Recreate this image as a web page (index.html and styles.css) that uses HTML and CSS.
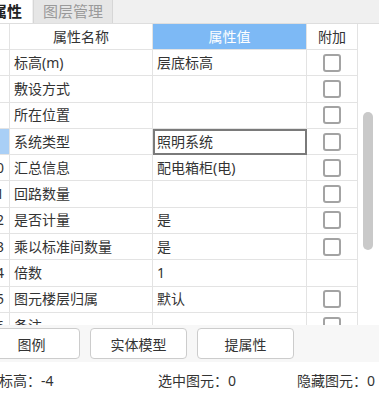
FILE: index.html
```html
<!DOCTYPE html>
<html lang="zh-CN">
<head>
    <meta charset="UTF-8">
    <meta name="viewport" content="width=device-width, initial-scale=1.0">
    <title>属性</title>
    <link rel="stylesheet" href="styles.css">
</head>
<body>
    <div class="panel">
        <!-- Tabs -->
        <div class="tabs">
            <div class="tab active">属性</div>
            <div class="tab">图层管理</div>
        </div>

        <!-- Property grid -->
        <div class="grid-wrap">
            <div class="grid">
                <div class="row head">
                    <div class="cell num"></div>
                    <div class="cell name center">属性名称</div>
                    <div class="cell value center blue">属性值</div>
                    <div class="cell add center">附加</div>
                </div>
                <div class="row">
                    <div class="cell num"></div>
                    <div class="cell name">标高(m)</div>
                    <div class="cell value">层底标高</div>
                    <div class="cell add"><span class="check"></span></div>
                </div>
                <div class="row">
                    <div class="cell num"></div>
                    <div class="cell name">敷设方式</div>
                    <div class="cell value"></div>
                    <div class="cell add"><span class="check"></span></div>
                </div>
                <div class="row">
                    <div class="cell num"></div>
                    <div class="cell name">所在位置</div>
                    <div class="cell value"></div>
                    <div class="cell add"><span class="check"></span></div>
                </div>
                <div class="row">
                    <div class="cell num selected"></div>
                    <div class="cell name">系统类型</div>
                    <div class="cell value editing">照明系统</div>
                    <div class="cell add"><span class="check"></span></div>
                </div>
                <div class="row">
                    <div class="cell num">10</div>
                    <div class="cell name">汇总信息</div>
                    <div class="cell value">配电箱柜(电)</div>
                    <div class="cell add"><span class="check"></span></div>
                </div>
                <div class="row">
                    <div class="cell num">11</div>
                    <div class="cell name">回路数量</div>
                    <div class="cell value"></div>
                    <div class="cell add"><span class="check"></span></div>
                </div>
                <div class="row">
                    <div class="cell num">12</div>
                    <div class="cell name">是否计量</div>
                    <div class="cell value">是</div>
                    <div class="cell add"><span class="check"></span></div>
                </div>
                <div class="row">
                    <div class="cell num">13</div>
                    <div class="cell name">乘以标准间数量</div>
                    <div class="cell value">是</div>
                    <div class="cell add"><span class="check"></span></div>
                </div>
                <div class="row">
                    <div class="cell num">14</div>
                    <div class="cell name">倍数</div>
                    <div class="cell value">1</div>
                    <div class="cell add"></div>
                </div>
                <div class="row">
                    <div class="cell num">15</div>
                    <div class="cell name">图元楼层归属</div>
                    <div class="cell value">默认</div>
                    <div class="cell add"><span class="check"></span></div>
                </div>
                <div class="row">
                    <div class="cell num">16</div>
                    <div class="cell name">备注</div>
                    <div class="cell value"></div>
                    <div class="cell add"><span class="check"></span></div>
                </div>
            </div>

            <!-- Scrollbar -->
            <div class="scroll">
                <div class="thumb"></div>
            </div>
        </div>

        <!-- Buttons -->
        <div class="actions">
            <button type="button">图例</button>
            <button type="button">实体模型</button>
            <button type="button">提属性</button>
        </div>

        <!-- Status bar -->
        <div class="status">
            <span class="stat first">标高：-4</span>
            <span class="stat second">选中图元：0</span>
            <span class="stat">隐藏图元：0</span>
        </div>
    </div>
</body>
</html>
```

FILE: styles.css
```css
/* General Styles */
body {
    margin: 0;
    padding: 0;
    overflow: hidden;
    background-color: #ffffff;
    color: #333333;
    font-family: "Noto Sans", "Noto Sans CJK SC", sans-serif;
    font-size: 14px;
}

.panel {
    width: 397px;
    margin-left: -18px;
}

/* Tabs */
.tabs {
    display: flex;
    height: 23px;
    background-color: #f0f0f0;
    border-bottom: 1px solid #dedede;
}

.tab {
    width: 80px;
    margin-left: 1px;
    background-color: #e6e6e6;
    border-left: 1px solid #d6d6d6;
    border-right: 1px solid #d6d6d6;
    box-sizing: border-box;
    color: #9a9a9a;
    font-size: 15px;
    line-height: 23px;
    text-align: center;
}

.tab.active {
    width: 50px;
    margin-left: 0;
    background-color: #ffffff;
    border: none;
    color: #222222;
    font-weight: bold;
}

/* Grid */
.grid-wrap {
    display: flex;
    height: 301px;
    overflow: hidden;
}

.grid {
    width: 376px;
    flex-shrink: 0;
}

.row {
    display: grid;
    grid-template-columns: 28px 143px 154px 51px;
    height: 26.3px;
}

.row.head {
    height: 26px;
}

.cell {
    display: flex;
    align-items: center;
    padding: 0 4px;
    border-right: 1px solid #e3e3e3;
    border-bottom: 1px solid #e3e3e3;
    box-sizing: border-box;
    overflow: hidden;
    white-space: nowrap;
    line-height: 20px;
}

.cell.center {
    justify-content: center;
}

.cell.num {
    justify-content: center;
    padding: 0 0 0 1px;
}

.cell.num.selected {
    background-color: #a9cff6;
}

.cell.blue {
    background-color: #7db9f5;
    color: #ffffff;
}

.cell.editing {
    outline: 2px solid #7a7a7a;
    outline-offset: -2px;
}

.cell.add {
    justify-content: center;
    padding: 0;
}

.check {
    width: 18px;
    height: 18px;
    border: 2px solid #a3a3a3;
    border-radius: 3px;
    box-sizing: border-box;
}

/* Scrollbar */
.scroll {
    flex: 1;
    padding: 88px 0 0 5px;
}

.thumb {
    width: 10px;
    height: 138px;
    border-radius: 5px;
    background-color: #c9c9c9;
}

/* Buttons */
.actions {
    display: flex;
    gap: 10px;
    height: 37px;
    padding: 3px 0 0 1px;
    box-sizing: border-box;
    background-color: #f7f7f7;
}

.actions button {
    width: 97px;
    height: 31px;
    background-color: #ffffff;
    border: 1px solid #cccccc;
    border-radius: 4px;
    color: #333333;
    font-family: inherit;
    font-size: 14px;
    cursor: pointer;
}

/* Status bar */
.status {
    display: flex;
    align-items: center;
    height: 35px;
    padding-left: 17px;
    white-space: nowrap;
}

.stat.first {
    width: 159px;
}

.stat.second {
    width: 139px;
}
```
